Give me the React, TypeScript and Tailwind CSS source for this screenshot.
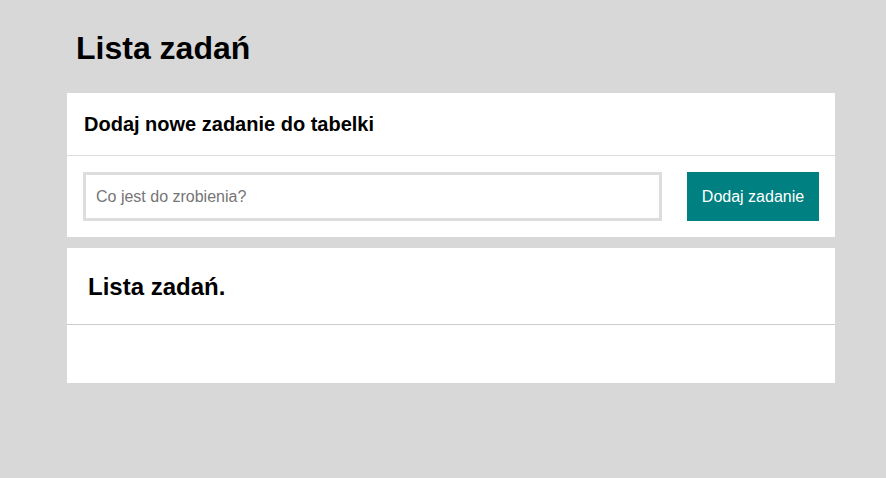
import React from "react";

export default function App() {
  return (
    <div
      className="min-h-[478px] w-full bg-[#d8d8d8]"
      style={{ fontFamily: '"Liberation Sans", Arial, sans-serif' }}
    >
      <div className="ml-[67px] w-[768px] pt-[30px]">
        <h1 className="pl-[9px] text-[32px] font-bold leading-[37px] text-black">
          Lista zadań
        </h1>
        <div className="mt-[26px] bg-white">
          <div className="border-b border-[#dedede] pl-[17px] pr-4 pt-[20px] pb-[19px]">
            <h3 className="text-[20px] font-bold leading-[23px] text-black">
              Dodaj nowe zadanie do tabelki
            </h3>
          </div>
          <div className="flex items-center gap-[25px] px-4 py-4">
            <input
              type="text"
              placeholder="Co jest do zrobienia?"
              className="h-[49px] flex-1 border-[3px] border-[#dddddd] bg-white px-[10px] text-[16px] text-black outline-none placeholder:text-[#757575]"
            />
            <button className="h-[49px] w-[132px] bg-[#008080] text-[16px] text-white">
              Dodaj zadanie
            </button>
          </div>
        </div>
        <div className="mt-[11px] bg-white">
          <div className="border-b border-[#cccccc] pl-[21px] pr-5 pt-[25px] pb-[24px]">
            <h2 className="text-[24px] font-bold leading-[27px] text-black">
              Lista zadań.
            </h2>
          </div>
          <div className="h-[58px]"></div>
        </div>
      </div>
    </div>
  );
}
